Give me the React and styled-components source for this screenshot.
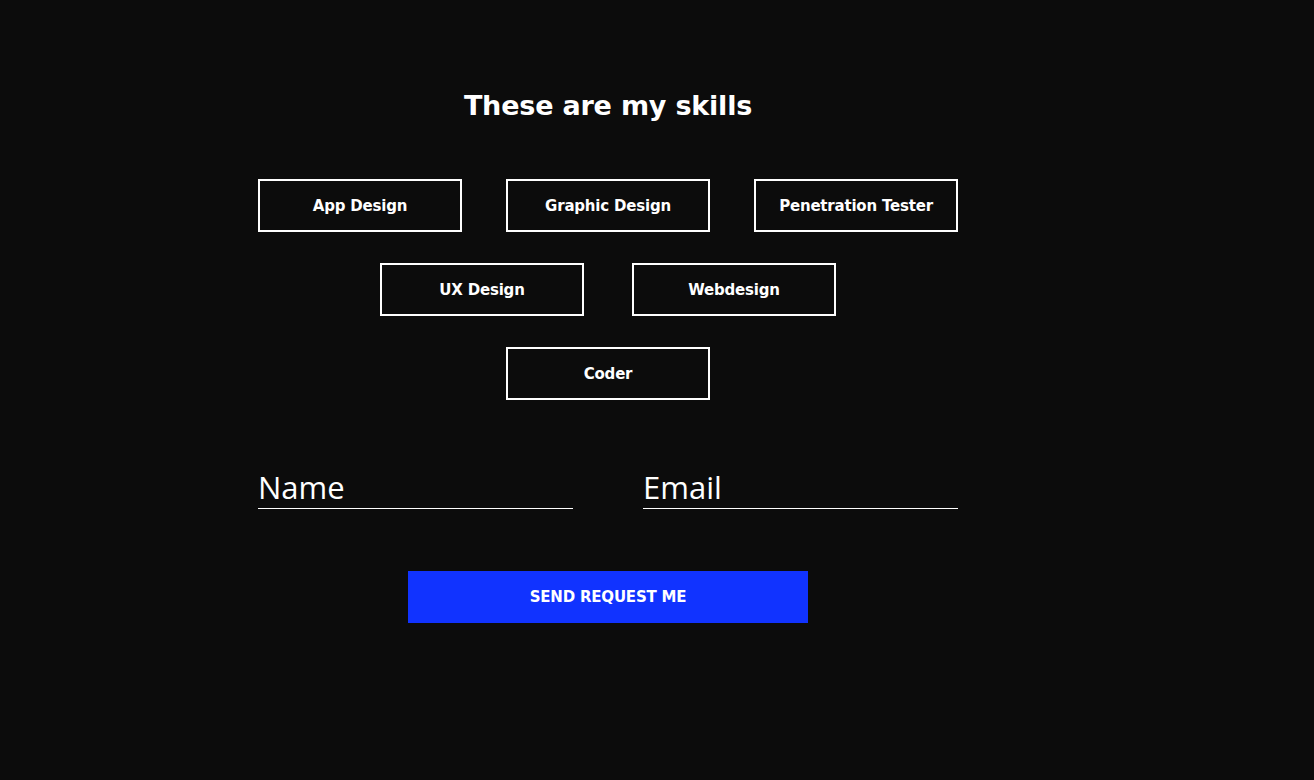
import React from 'react'
import styled, { createGlobalStyle } from 'styled-components'

const GlobalStyle = createGlobalStyle`
    html, body {
        margin: 0;
        background: #0c0c0c;
        color: #fff;
        font-family: 'DejaVu Sans', 'Open Sans', sans-serif;
    }
`

const Page = styled.div`
    min-height: 780px;
    display: flex;
    justify-content: center;
`

const Section = styled.section`
    width: 700px;
    padding-top: 88px;
    margin-right: 98px;
`

const Title = styled.h2`
    margin: 0 0 55px;
    text-align: center;
    font-size: 27px;
    line-height: 36px;
    font-weight: 700;
    letter-spacing: -0.2px;
`

const SkillRows = styled.div`
    display: flex;
    flex-direction: column;
    gap: 31px;
`

const SkillRow = styled.div`
    display: flex;
    justify-content: center;
    gap: ${p => p.gap || 44}px;
`

const Skill = styled.div`
    box-sizing: border-box;
    width: 204px;
    height: 53px;
    border: 2px solid #fff;
    display: flex;
    align-items: center;
    justify-content: center;
    font-size: 15px;
    font-weight: 700;
    letter-spacing: -0.2px;
`

const Form = styled.form`
    margin-top: 65px;
    display: flex;
    flex-direction: column;
    align-items: center;
`

const Fields = styled.div`
    width: 100%;
    display: flex;
    justify-content: space-between;
`

const Field = styled.input`
    box-sizing: border-box;
    width: 315px;
    height: 44px;
    padding: 0;
    background: transparent;
    border: none;
    border-bottom: 1px solid #fff;
    color: #fff;
    font-family: 'Open Sans', sans-serif;
    font-size: 31px;
    font-weight: 400;
    outline: none;

    &::placeholder {
        color: #fff;
        opacity: 1;
    }
`

const SendButton = styled.button`
    margin-top: 62px;
    width: 400px;
    height: 52px;
    border: none;
    background: #1133ff;
    color: #fff;
    font-family: 'DejaVu Sans', sans-serif;
    font-size: 15px;
    font-weight: 700;
    text-transform: uppercase;
    letter-spacing: -0.2px;
`

const rows = [
    ['App Design', 'Graphic Design', 'Penetration Tester'],
    ['UX Design', 'Webdesign'],
    ['Coder']
]

const App = () => (
    <Page>
        <GlobalStyle />
        <Section>
            <Title>These are my skills</Title>
            <SkillRows>
                {rows.map((row, i) => (
                    <SkillRow key={i} gap={i === 1 ? 48 : 44}>
                        {row.map(skill => <Skill key={skill}>{skill}</Skill>)}
                    </SkillRow>
                ))}
            </SkillRows>
            <Form onSubmit={e => e.preventDefault()}>
                <Fields>
                    <Field placeholder="Name" />
                    <Field placeholder="Email" />
                </Fields>
                <SendButton type="submit">Send request me</SendButton>
            </Form>
        </Section>
    </Page>
)

export default App
